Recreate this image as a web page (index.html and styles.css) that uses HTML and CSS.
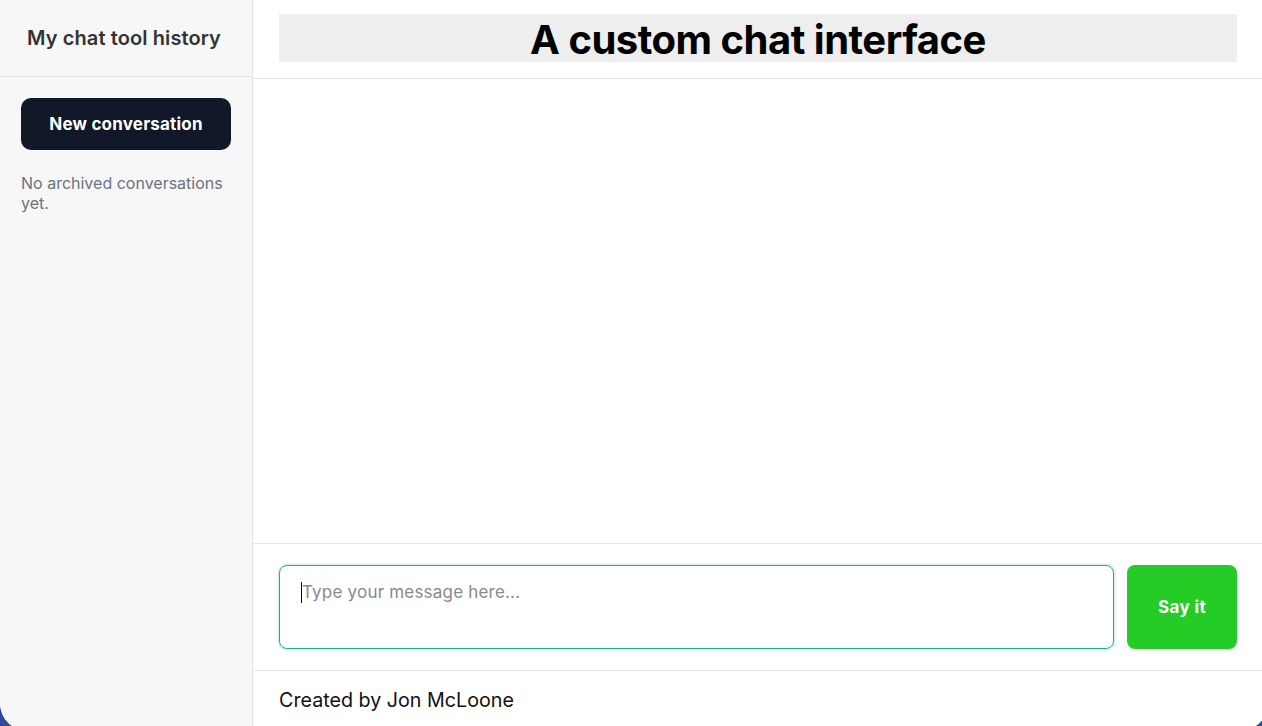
FILE: index.html
```html
<!DOCTYPE html>
<html lang="en">
<head>
<meta charset="utf-8">
<title>A custom chat interface</title>
<link rel="stylesheet" href="styles.css">
</head>
<body>
<div class="app">
  <aside class="sidebar">
    <div class="sidebar-head">My chat tool history</div>
    <div class="sidebar-body">
      <button class="new-btn" type="button">New conversation</button>
      <p class="empty-note">No archived conversations yet.</p>
    </div>
  </aside>
  <main class="chat">
    <header class="chat-head">
      <h1 class="chat-title">A custom chat interface</h1>
    </header>
    <section class="messages"></section>
    <form class="composer">
      <div class="input-box">
        <span class="caret"></span>
        <span class="placeholder">Type your message here...</span>
      </div>
      <button class="send-btn" type="button">Say it</button>
    </form>
    <footer class="credit">Created by Jon McLoone</footer>
  </main>
</div>
</body>
</html>
```

FILE: styles.css
```css
html, body {
  margin: 0;
  padding: 0;
  height: 726px;
  overflow: hidden;
  background: #2f4a9c;
  font-family: Inter, "Noto Sans", "Liberation Sans", sans-serif;
}

.app {
  display: flex;
  width: 1268px;
  height: 731px;
  background: #ffffff;
  border-radius: 0 0 28px 28px;
  overflow: hidden;
}

/* sidebar */
.sidebar {
  width: 252px;
  flex: none;
  background: #f7f7f7;
  border-right: 1px solid #e3e3e3;
  display: flex;
  flex-direction: column;
}

.sidebar-head {
  height: 77px;
  border-bottom: 1px solid #e3e3e3;
  display: flex;
  align-items: center;
  justify-content: center;
  font-size: 20px;
  font-weight: 600;
  color: #333333;
  box-sizing: border-box;
  padding: 0 4px 1px 0;
  letter-spacing: 0.1px;
}

.sidebar-body {
  padding: 21px 21px;
}

.new-btn {
  display: block;
  width: 210px;
  height: 52px;
  border: 0;
  border-radius: 10px;
  background: #111827;
  color: #ffffff;
  font-family: inherit;
  font-size: 17px;
  font-weight: 700;
  letter-spacing: 0.2px;
}

.empty-note {
  margin: 23px 0 0;
  font-size: 16px;
  line-height: 20px;
  color: #6b7280;
}

/* chat column */
.chat {
  flex: 1;
  display: flex;
  flex-direction: column;
  min-width: 0;
  padding-right: 6px;
}

.chat-head {
  height: 79px;
  border-bottom: 1px solid #e6e6e6;
  padding: 14px 25px 0 26px;
  box-sizing: border-box;
}

.chat-title {
  margin: 0;
  height: 48px;
  background: #eeeeee;
  display: flex;
  align-items: center;
  justify-content: center;
  font-size: 40px;
  font-weight: 700;
  color: #000000;
  letter-spacing: -0.5px;
  padding-top: 3px;
  box-sizing: border-box;
}

.messages {
  flex: 1;
}

.composer {
  margin: 0;
  border-top: 1px solid #e6e6e6;
  border-bottom: 1px solid #e6e6e6;
  padding: 21px 25px 21px 26px;
  display: flex;
  gap: 13px;
}

.input-box {
  flex: 1;
  height: 84px;
  box-sizing: border-box;
  border: 1.5px solid #26ab98;
  border-radius: 8px;
  box-shadow: 0 0 0 1.5px rgba(43, 179, 159, 0.2);
  padding: 15px 21px;
  display: flex;
  align-items: flex-start;
  font-size: 17px;
  line-height: 22px;
}

.caret {
  width: 1px;
  height: 21px;
  margin-top: 1px;
  background: #111111;
}

.placeholder {
  color: #8a8a8a;
  letter-spacing: 0.2px;
}

.send-btn {
  width: 110px;
  height: 84px;
  border: 0;
  border-radius: 8px;
  background: #26cc26;
  color: #ffffff;
  font-family: inherit;
  font-size: 17px;
  font-weight: 700;
  letter-spacing: 0.4px;
}

.credit {
  padding: 15px 26px;
  font-size: 19.7px;
  line-height: 28px;
  color: #111111;
  height: 60px;
  box-sizing: border-box;
}
```
